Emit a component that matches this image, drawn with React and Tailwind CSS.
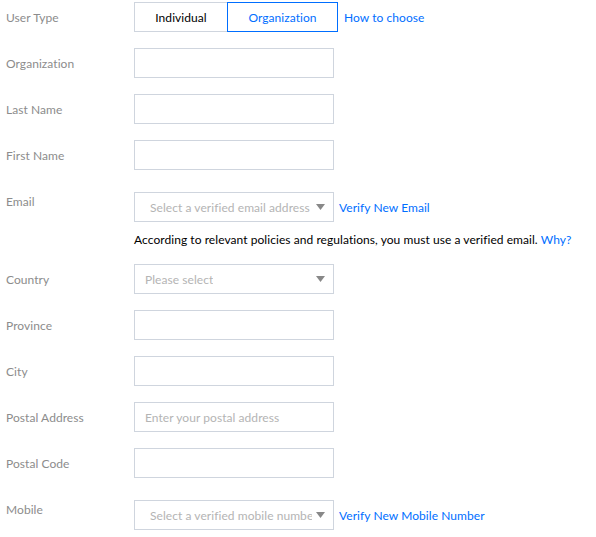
import React from "react";

const font = { fontFamily: '"Segoe UI", Lato, "Noto Sans", sans-serif' };

function Caret() {
  return (
    <svg width="9" height="6" viewBox="0 0 9 6" className="shrink-0">
      <path d="M0 0 L9 0 L4.5 6 Z" fill="#888888" />
    </svg>
  );
}

function Row({ label, children, top }) {
  return (
    <div className={`flex ${top ? "items-start" : "items-center"}`}>
      <div className={`w-[134px] shrink-0 pl-[6px] text-[12px] leading-[18px] text-[#8c8c8c] ${top ? "pt-[7px]" : "pt-[2px]"}`}>
        {label}
      </div>
      {children}
    </div>
  );
}

function Input({ placeholder }) {
  return (
    <div className="flex h-[30px] w-[200px] items-center border border-[#cfd5de] bg-white px-[10px] pt-[2px] text-[12px] text-[#b4b4b4]">
      {placeholder}
    </div>
  );
}

function Select({ placeholder, pl = "px-[10px]" }) {
  return (
    <div className={`flex h-[30px] w-[200px] items-center justify-between gap-[4px] border border-[#cfd5de] bg-white ${pl} text-[12px] text-[#b4b4b4]`}>
      <span className="overflow-hidden whitespace-nowrap pt-[2px]">{placeholder}</span>
      <Caret />
    </div>
  );
}

export default function App() {
  return (
    <div className="min-h-[537px] w-[596px] bg-white pt-[2px] tracking-[0.06px]" style={font}>
      <div className="flex flex-col gap-[16px]">
        <Row label="User Type">
          <div className="flex h-[30px] items-center text-[12px]">
            <div className="flex h-[30px] w-[93px] items-center justify-center border border-r-0 border-[#cfd5de] pt-[2px] text-[#000000]">
              Individual
            </div>
            <div className="flex h-[30px] w-[111px] items-center justify-center border border-[#006eff] pt-[2px] text-[#006eff]">
              Organization
            </div>
            <span className="ml-[6px] pt-[2px] text-[#006eff]">How to choose</span>
          </div>
        </Row>
        <Row label="Organization"><Input /></Row>
        <Row label="Last Name"><Input /></Row>
        <Row label="First Name"><Input /></Row>
        <Row label="Email" top>
          <div className="flex flex-col pt-[6px]">
            <div className="flex items-center">
              <Select placeholder="Select a verified email address" pl="pl-[15px] pr-[8px]" />
              <span className="ml-[5px] pt-[2px] text-[12px] text-[#006eff]">Verify New Email</span>
            </div>
            <div className="mt-[9px] whitespace-nowrap text-[12px] leading-[17px] text-[#000000]">
              According to relevant policies and regulations, you must use a verified email.{" "}
              <span className="text-[#006eff]">Why?</span>
            </div>
          </div>
        </Row>
        <Row label="Country">
          <Select placeholder="Please select" pl="pl-[10px] pr-[8px]" />
        </Row>
        <Row label="Province"><Input /></Row>
        <Row label="City"><Input /></Row>
        <Row label="Postal Address"><Input placeholder="Enter your postal address" /></Row>
        <Row label="Postal Code"><Input /></Row>
        <Row label="Mobile" top>
          <div className="flex items-center pt-[6px]">
            <Select placeholder="Select a verified mobile number" pl="pl-[15px] pr-[8px]" />
            <span className="ml-[5px] pt-[2px] text-[12px] text-[#006eff]">Verify New Mobile Number</span>
          </div>
        </Row>
      </div>
    </div>
  );
}
